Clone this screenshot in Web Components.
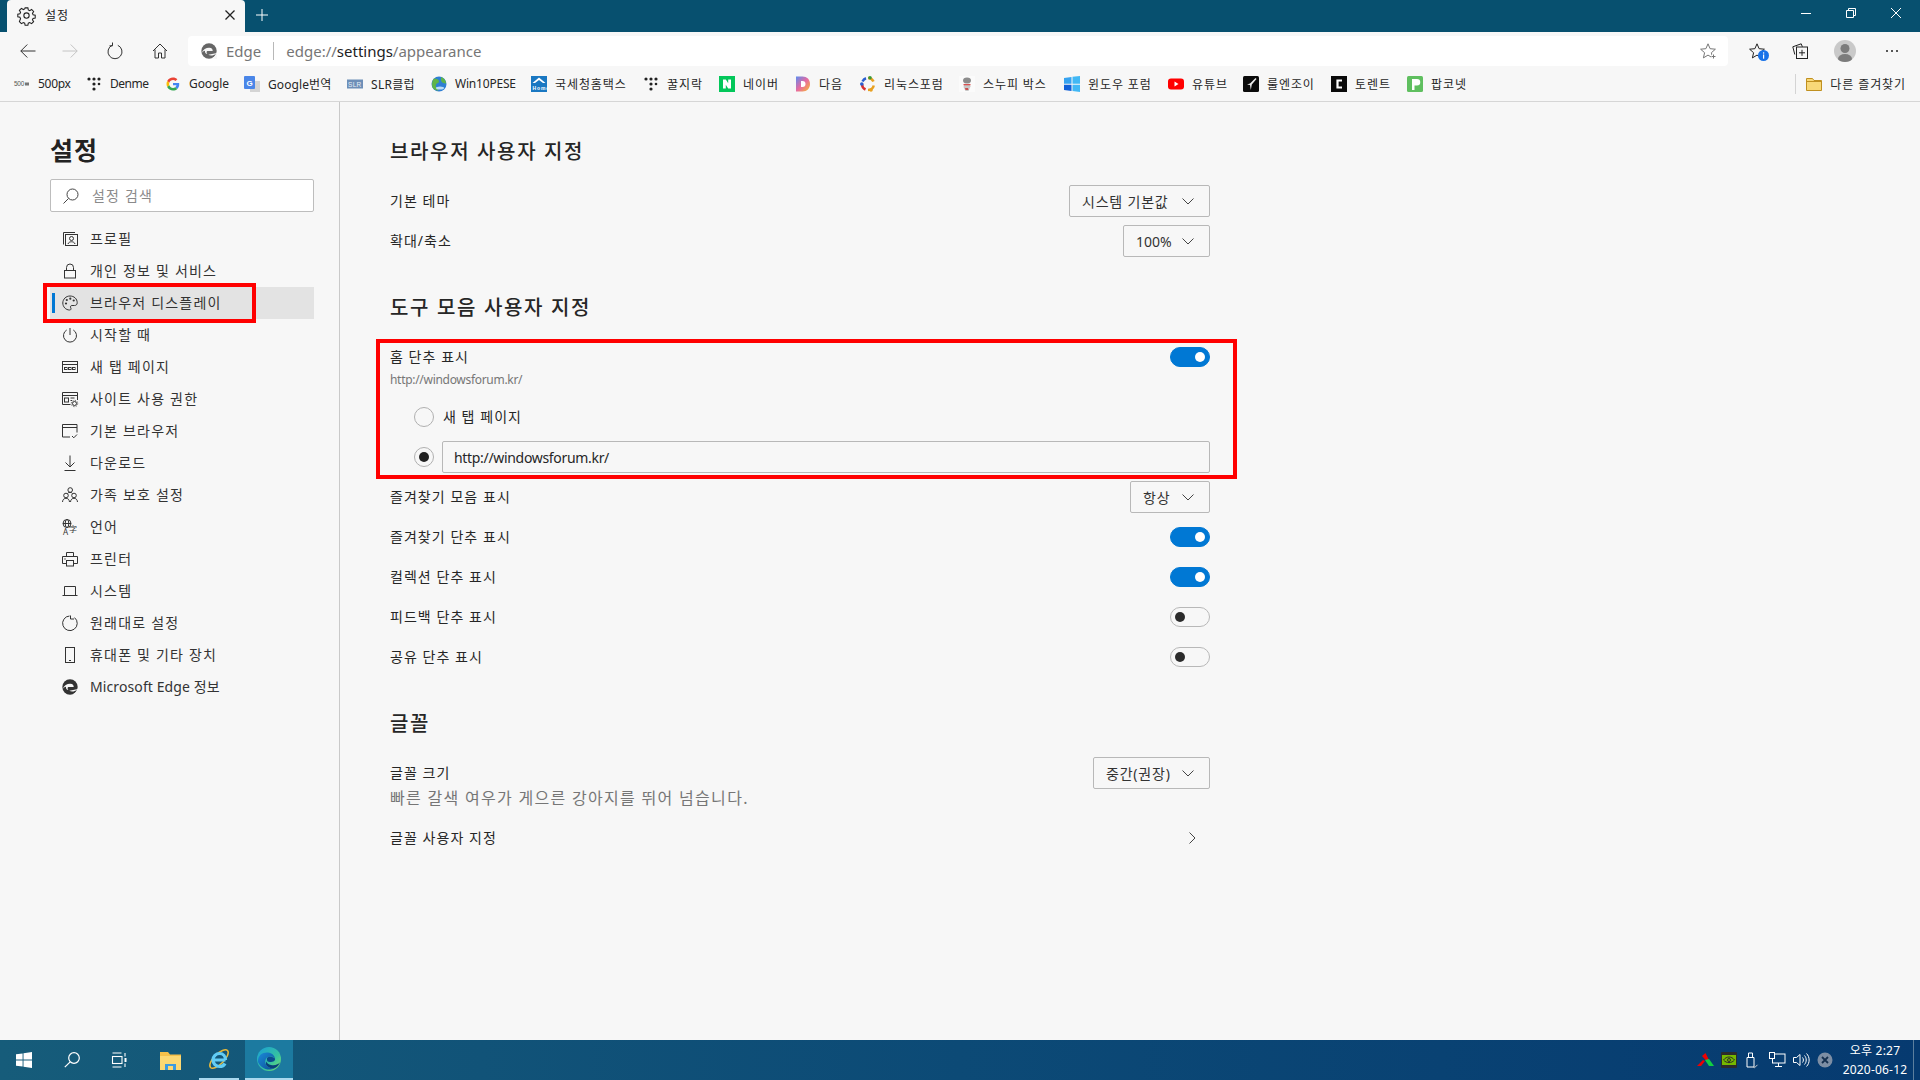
<!DOCTYPE html>
<html lang="ko">
<head>
<meta charset="utf-8">
<title>설정</title>
<style>
html, body { margin: 0; height: 100%; }
body {
    width: 1920px; height: 1080px; overflow: hidden;
    display: flex; flex-direction: column;
    font-family: "Noto Sans", "Noto Sans CJK KR", sans-serif;
    color: #262626; background: #f7f7f7;
}
</style>
</head>
<body>
<title-bar></title-bar>
<tool-bar></tool-bar>
<bookmark-bar>
    <book-mark icon="b500" w="72" ls="-.3">500px</book-mark>
    <book-mark icon="dots" w="79" ls="-.5">Denme</book-mark>
    <book-mark icon="google" w="79" ls="-.1">Google</book-mark>
    <book-mark icon="translate" w="103" ls=".1">Google번역</book-mark>
    <book-mark icon="slr" w="84" ls=".3">SLR클럽</book-mark>
    <book-mark icon="globe" w="100" ls="-.2">Win10PESE</book-mark>
    <book-mark icon="hometax" w="112">국세청홈택스</book-mark>
    <book-mark icon="dots" w="76">꿀지락</book-mark>
    <book-mark icon="naver" w="76">네이버</book-mark>
    <book-mark icon="daum" w="65">다음</book-mark>
    <book-mark icon="linux" w="99">리눅스포럼</book-mark>
    <book-mark icon="snoopy" w="105">스누피 박스</book-mark>
    <book-mark icon="winforum" w="104">윈도우 포럼</book-mark>
    <book-mark icon="youtube" w="75">유튜브</book-mark>
    <book-mark icon="ruli" w="88">룰엔조이</book-mark>
    <book-mark icon="ctile" w="76">토렌트</book-mark>
    <book-mark icon="ptile" w="100">팝코넷</book-mark>
</bookmark-bar>
<div style="display:flex;flex:1;min-height:0">
    <side-nav>
        <side-item icon="profile">프로필</side-item>
        <side-item icon="lock">개인 정보 및 서비스</side-item>
        <side-item icon="palette" active>브라우저 디스플레이</side-item>
        <side-item icon="power">시작할 때</side-item>
        <side-item icon="newtab">새 탭 페이지</side-item>
        <side-item icon="site">사이트 사용 권한</side-item>
        <side-item icon="browser">기본 브라우저</side-item>
        <side-item icon="download">다운로드</side-item>
        <side-item icon="family">가족 보호 설정</side-item>
        <side-item icon="language">언어</side-item>
        <side-item icon="printer">프린터</side-item>
        <side-item icon="laptop">시스템</side-item>
        <side-item icon="reset">원래대로 설정</side-item>
        <side-item icon="phone">휴대폰 및 기타 장치</side-item>
        <side-item icon="edgemono" ls=".1">Microsoft Edge 정보</side-item>
    </side-nav>
    <settings-page></settings-page>
</div>
<task-bar></task-bar>

<script>
const S = 'fill="none" stroke="currentColor" stroke-width="1"';
const iconLib = {
    // side menu
    profile: `<g ${S}><path d="M1.500 13.500V1.500H13"/><rect x="3.500" y="3.500" width="12" height="11"/><circle cx="9.500" cy="7.500" r="2"/><path d="M6 13c.6-3 6.400-3 7 0"/></g>`,
    lock: `<g ${S}><rect x="2.500" y="7.500" width="11" height="7.500"/><path d="M4.500 7.500V4.500a3.500 3.500 0 0 1 7 0v3"/></g>`,
    palette: `<g ${S}><path d="M8 1C4 1 .8 4.200.8 8s3 7 6.700 7c1.700 0 1.800-1.200 1.200-2.200-.7-1.200 0-2.300 1.300-2.300h2.500c1.700 0 2.700-1 2.700-2.800C15.200 3.800 12 1 8 1z"/></g><g fill="currentColor"><circle cx="4" cy="8.500" r="1.100"/><circle cx="4.800" cy="5" r="1.100"/><circle cx="8.300" cy="3.700" r="1.100"/><circle cx="11.700" cy="5.500" r="1.100"/></g>`,
    power: `<g ${S}><path d="M8 1v7"/><path d="M4.700 3a6.500 6.500 0 1 0 6.600 0"/></g>`,
    newtab: `<g ${S}><rect x=".5" y="2.500" width="15" height="11"/><path d="M.5 5.500h15"/><rect x="2.500" y="8.500" width="2.500" height="2"/><rect x="6.500" y="8.500" width="2.500" height="2"/><rect x="10.500" y="8.500" width="2.500" height="2"/></g>`,
    site: `<g ${S}><path d="M8.500 13.500H.5v-12h15V9"/><path d="M.5 4.500h15"/><rect x="2.500" y="7" width="4" height="4"/><path d="M8.500 7h4M8.500 9.500h1.500"/><circle cx="12.500" cy="12.500" r="2"/><circle cx="12.500" cy="12.500" r="3.200" stroke-dasharray="1 1.500"/></g>`,
    browser: `<g ${S}><path d="M15 9.500V1.500H.5v12.500H8"/><path d="M.5 4.500H15"/><path d="M10 13l1.800 1.800L15 11.500"/></g>`,
    download: `<g ${S}><path d="M8 .5v11.500M3.500 7.500L8 12l4.500-4.500M2.500 15.500h11"/></g>`,
    family: `<g ${S}><circle cx="8.200" cy="3" r="2.300"/><circle cx="4" cy="8.500" r="2.300"/><circle cx="12" cy="8.500" r="2.300"/><path d="M.5 15c.2-5 6.800-5 7 0M8.500 15c.2-5 6.800-5 7 0M5.500 6.500c.5-1.500 4.500-1.500 5 0"/></g>`,
    language: `<g ${S}><circle cx="5" cy="4.500" r="4"/><ellipse cx="5" cy="4.500" rx="1.800" ry="4"/><path d="M1 4.500h8"/></g><text x="1" y="15.500" font-size="8" fill="currentColor" font-family="Noto Sans">A</text><text x="7" y="13" font-size="8" fill="currentColor" font-family="Noto Sans CJK KR">字</text>`,
    printer: `<g ${S}><path d="M4.500 5V1.500h7V5M4.500 12.500H.5V5.500h15v7h-4"/><rect x="4.500" y="9.500" width="7" height="5.500"/></g><circle cx="3" cy="8" r=".7" fill="currentColor"/>`,
    laptop: `<g ${S}><path d="M2.500 12V3.500h11V12M.5 12.500h15"/></g>`,
    reset: `<g ${S}><path d="M12.500 2.600a7.300 7.300 0 1 1-5-1.600"/><path d="M8.500.5v3.500H12"/></g>`,
    phone: `<g ${S}><rect x="3.500" y=".5" width="9" height="15"/><path d="M7 13.500h2"/></g>`,
    edgemono: `<svg viewBox="0 0 24 24" x="0" y="0" width="16" height="16"><circle cx="12" cy="12" r="11.500" fill="currentColor"/><path d="M.8 15C3 9.500 8 6.800 12.500 7c3.500.2 5.500 2.500 5 5L9.500 12c-1.500 1-1.500 3 0 4.500-2.500-.5-4-2.500-3.500-5C4 12 2 13.300.8 15z" fill="#f7f7f7"/><path d="M11 17.500c3 2 8 1.500 11.500-1.500-1 3-3.500 6-7.500 7l9 1V15z" fill="#f7f7f7"/></svg>`,
    // toolbar
    back: `<g ${S} stroke-width="1.100"><path d="M15.500 8H.8M7.300 1.500L.8 8l6.500 6.500"/></g>`,
    forward: `<g ${S} stroke-width="1.100"><path d="M.5 8h14.700M8.700 1.500L15.200 8l-6.500 6.500"/></g>`,
    refresh: `<g ${S} stroke-width="1.100"><path d="M10.800 2.300a7 7 0 1 1-5.600 0"/><path d="M5.500 -.5v3.300H2.500"/></g>`,
    home: `<g ${S} stroke-width="1.100"><path d="M1 8l7-7 7 7M3 6.500v8.500h3.500v-5h3v5H13V6.500"/></g>`,
    star: `<g ${S}><path d="M8 .8l2.100 4.900 5.300.5-4 3.500 1.200 5.200L8 12.100l-4.600 2.800 1.200-5.200-4-3.500 5.300-.5z"/></g><path d="M11 13.500h4.500M13.200 11.200v4.500" stroke="#fff" stroke-width="2.500"/><path d="M11.500 13.500h4M13.500 11.500v4" stroke="currentColor"/>`,
    favbar: `<g ${S}><path d="M8 .8l2.100 4.900 5.300.5-4 3.500 1.200 5.200L8 12.100l-4.600 2.800 1.200-5.200-4-3.500 5.300-.5z"/></g><circle cx="14.500" cy="12.500" r="5.500" fill="#1a73e8"/><rect x="14" y="11.500" width="1.200" height="4.200" fill="#fff"/><rect x="14" y="9.300" width="1.200" height="1.300" fill="#fff"/>`,
    collections: `<g ${S}><path d="M2.800 11.500L.8 3.800 9.200.8l1.200 3"/><rect x="4.500" y="4" width="11" height="11.500" fill="#f7f7f7"/><path d="M10 6.800v6M7 9.800h6"/></g>`,
    gear: `<g ${S}><circle cx="8" cy="8" r="2.500"/><path d="M6.700 .8h2.600l.4 2 1.300.6 1.800-1.100 1.900 1.900-1.100 1.800.6 1.300 2 .4v2.600l-2 .4-.6 1.300 1.100 1.800-1.900 1.900-1.800-1.100-1.300.6-.4 2H6.700l-.4-2-1.300-.6-1.800 1.100-1.900-1.900L2.400 11l-.6-1.300-2-.4V6.700l2-.4.6-1.300-1.100-1.800 1.900-1.900L5 2.400l1.300-.6z"/></g>`,
    search: `<g ${S}><circle cx="9.500" cy="6.500" r="5.500"/><path d="M5.500 10.500L.5 15.500"/></g>`,
    // favicons
    b500: `<text x="0" y="10" font-size="6.500" fill="#555" font-family="Liberation Sans">500</text><rect x="11" y="6.500" width="4" height="3" fill="#777"/>`,
    dots: `<g fill="#222"><circle cx="3" cy="3" r="1.600"/><circle cx="8" cy="3" r="1.600"/><circle cx="13" cy="3" r="1.600"/><circle cx="8" cy="8" r="1.600"/><circle cx="13" cy="8" r="1.300"/><circle cx="8" cy="13" r="1.600"/></g>`,
    google: `<svg viewBox="0 0 48 48" x="1.500" y="1.500" width="13" height="13"><path fill="#EA4335" d="M24 9.500c3.500 0 6.700 1.200 9.200 3.600l6.900-6.900C35.900 2.400 30.500 0 24 0 14.600 0 6.500 5.400 2.600 13.200l8 6.200C12.400 13.700 17.700 9.500 24 9.500z"/><path fill="#4285F4" d="M47 24.500c0-1.600-.2-3.100-.4-4.500H24v9h12.900c-.6 3-2.200 5.500-4.800 7.200l7.700 6c4.500-4.200 7.200-10.400 7.200-17.700z"/><path fill="#FBBC05" d="M10.500 28.600c-.5-1.500-.8-3-.8-4.600s.3-3.200.8-4.600l-8-6.200C.9 16.500 0 20.100 0 24s.9 7.500 2.600 10.800z"/><path fill="#34A853" d="M24 48c6.500 0 11.900-2.100 15.900-5.800l-7.700-6c-2.200 1.500-4.900 2.300-8.200 2.300-6.300 0-11.600-4.200-13.500-9.900l-8 6.200C6.500 42.600 14.600 48 24 48z"/></svg>`,
    translate: `<rect x="6" y="5" width="10" height="11" fill="#d4d4d4"/><rect x="0" y="0" width="11" height="13" rx="1" fill="#4a86e8"/><text x="2.500" y="9.500" font-size="8" font-weight="700" fill="#fff" font-family="Liberation Sans">G</text>`,
    slr: `<rect x="0" y="3.500" width="16" height="9" fill="#6d8fb8"/><text x="1" y="10.500" font-size="6.500" fill="#e8eef6" font-family="Liberation Sans">SLR</text>`,
    globe: `<circle cx="8" cy="8" r="7.500" fill="#2f7fd4"/><path d="M3 2.500c3 0 5 1 5 3s-2 1-3 3 .5 3 2 5-4 1-5.500-2C.5 8 1.500 4 3 2.500zM10 1c3 1 5 3.500 5 6.500-2 0-5-1-5-3.500z" fill="#5fb548"/><ellipse cx="9" cy="12" rx="4" ry="1.500" fill="#bcdcf5"/>`,
    hometax: `<rect width="16" height="16" fill="#1a78c2"/><path d="M1.500 7L8 1.500 14.500 7h-2.500L8 4 4 7z" fill="#fff"/><text x="1.500" y="13.500" font-size="5" font-weight="700" fill="#fff" font-family="Liberation Sans">Home</text>`,
    naver: `<rect width="16" height="16" fill="#03c75a"/><path d="M4 3.500h2.800l2.400 3.800V3.500H12v9H9.200L6.800 8.700v3.800H4z" fill="#fff"/>`,
    daum: `<defs><linearGradient id="dg" x1="0" y1="0" x2="1" y2="1"><stop offset="0" stop-color="#5a8df0"/><stop offset=".5" stop-color="#e86aa0"/><stop offset="1" stop-color="#f8c02c"/></linearGradient></defs><path d="M1 .5h6.500c4.500 0 7.500 3 7.500 7.500s-3 7.500-7.500 7.500H1z" fill="url(#dg)"/><path d="M6 5h1.500c2 0 3 1.200 3 3s-1 3-3 3H6z" fill="#fff"/>`,
    linux: `<g fill="none" stroke-width="2.500"><path d="M8 2a6 6 0 0 1 5.500 3.500" stroke="#e8a020"/><path d="M13.800 9.500A6 6 0 0 1 8 14" stroke="#e8a020"/><path d="M5.500 13.500A6 6 0 0 1 2 8" stroke="#d83030"/><path d="M2.500 5.500A6 6 0 0 1 6 2.300" stroke="#2a5fd0"/></g><circle cx="10" cy="1.800" r="1.800" fill="#3a9a3a"/><circle cx="1.800" cy="8" r="1.800" fill="#2a5fd0"/><circle cx="11" cy="14" r="1.800" fill="#e8a020"/>`,
    snoopy: `<rect width="16" height="16" fill="#fbfbfb"/><ellipse cx="8" cy="4.500" rx="4" ry="3" fill="#8c8c8c"/><path d="M5.500 7.500h5l1 3-2 4.500H6.500L4.500 11z" fill="#c8c8c8"/><path d="M4.500 8h7v1.300h-7z" fill="#d85050"/><path d="M6 12l3 0 .5 2H6.500z" fill="#c85050"/>`,
    winforum: `<path d="M0 2l7.500-1v6.800H0z" fill="#36a3f0"/><path d="M8.500.8L16 0v7.800H8.500z" fill="#41b8f5"/><path d="M0 8.800h7.500v6.300L0 14z" fill="#1060d8"/><path d="M8.500 8.800H16V16l-7.500-1z" fill="#41b8f5"/>`,
    youtube: `<rect x="0" y="2.500" width="16" height="11" rx="3" fill="#f00"/><path d="M6.500 5.500l4 2.500-4 2.500z" fill="#fff"/>`,
    ruli: `<rect width="16" height="16" rx="1.500" fill="#0b0b0b"/><path d="M12.500 2L7 7.500l-3 1 3 .5 .8 5 1-5.500L13.500 3z" fill="#eee"/>`,
    ctile: `<rect width="16" height="16" fill="#0a0a0a"/><path d="M11 4.500H6.500v7H11" fill="none" stroke="#fff" stroke-width="2.200"/>`,
    ptile: `<rect width="16" height="16" rx="1.500" fill="#5fbf5f"/><path d="M5 14V3h5a3 3 0 0 1 0 6.500H7.500V14z" fill="#fff"/>`,
    folder: `<path d="M.5 2.500h6l1.500 2h7.500v10H.5z" fill="#f8d878" stroke="#c09020"/><path d="M.5 5.500h15" stroke="#c09020"/>`,
    // taskbar
    windows: `<path d="M0 2.300l6.600-.9v6.200H0zM7.500 1.300L16 0v7.600H7.500zM0 8.400h6.600v6.200L0 13.700zM7.500 8.400H16V16l-8.500-1.200z" fill="#fff"/>`,
    tasksearch: `<g fill="none" stroke="#fff" stroke-width="1.200"><circle cx="10" cy="6" r="5.300"/><path d="M6.200 9.800L.8 15.200"/></g>`,
    taskview: `<g fill="none" stroke="#fff" stroke-width="1.100"><path d="M.5 1h9M.5 15h9"/><rect x=".5" y="4.500" width="9.500" height="7"/><path d="M13 1v3.500M13 11.500V15"/></g><rect x="12.500" y="6" width="2" height="4" fill="#fff"/>`,
    explorer: `<path d="M0 2h8l2 2.500h11V20H0z" fill="#f5c04a"/><path d="M0 6h21v14H0z" fill="#fcd873"/><path d="M5 14h11v6H5z" fill="#3d9be0"/><path d="M8 16h5v4H8z" fill="#fcd873"/>`,
    ie: `<g fill="none"><ellipse cx="11" cy="11" rx="12" ry="5" transform="rotate(-45 11 11)" stroke="#e8b93a" stroke-width="1.500"/><path d="M17.500 12H6M17.500 12c0-4-2.500-6.500-6-6.500S5 8.500 5 12s2.800 6.500 6.500 6.500c2.500 0 4.500-1 5.500-3" stroke="#62cdf5" stroke-width="3.200"/></g>`,
    edgecolor: `<svg viewBox="0 0 24 24" width="24" height="24"><defs><linearGradient id="eg" x1="0" y1="0" x2="1" y2="1"><stop offset="0" stop-color="#1a9fd8"/><stop offset=".6" stop-color="#35c1a0"/><stop offset="1" stop-color="#7be36a"/></linearGradient><linearGradient id="eb" x1="0" y1="0" x2="1" y2="1"><stop offset="0" stop-color="#1b8ad8"/><stop offset="1" stop-color="#0c4f96"/></linearGradient></defs><circle cx="12" cy="12" r="12" fill="url(#eg)"/><path d="M1 15C.5 8 6 5 11 5.500c4 .4 6.500 3 7 6-2-2.500-5-2.500-7-1.500-2.500 1.300-3.500 4.500-2 7.500 1.500 3 5.500 4.500 9.500 3.300A12 12 0 0 1 1 15z" fill="url(#eb)"/><path d="M10 11c1.500-1.500 5-2 8 .5.500 2.500-2 3.500-5 3.500-2 0-3-1-3-2z" fill="#0b4a8d"/><path d="M9 17.500c1.500 3 5.500 4.500 9.500 3.300 2-1.300 3.500-3 4.500-5.500-1.500 2-5 3.500-9 2.700-2.500-.5-4-2-5-3.500z" fill="#0b3f7a"/></svg>`,
    trayarrow: `<path d="M8.500 1L12 8l-3 .5L5 4z" fill="#f00000"/><path d="M0 14l6-6 2 1-4 5z" fill="#f00000"/><path d="M8 8l4-1 5 7h-5z" fill="#10d040"/>`,
    nvidia: `<rect width="16" height="16" rx="1" fill="#2c2c2c"/><rect x="1" y="3" width="14" height="10" fill="#76b900"/><path d="M2.500 8c3-4 8-4 11 0-3 3.500-8 3.500-11 0z" fill="none" stroke="#2c2c2c"/><circle cx="8" cy="8" r="1.500" fill="none" stroke="#2c2c2c"/>`,
    usb: `<g fill="none" stroke="#fff"><path d="M2 5.500h7v9.500H2zM3.500 5.500V1h4v4.500"/><path d="M8 14.500l1.500 1.300 3-3" stroke="#ccc"/></g>`,
    network: `<g fill="none" stroke="#fff"><rect x="3.500" y="2" width="12.500" height="9"/><path d="M9.500 11v3M6 14.500h7"/><rect x=".5" y=".5" width="5" height="6" fill="#0a3a6f"/></g>`,
    volume: `<g fill="none" stroke="#fff"><path d="M.5 5.500h3l3.500-3v11l-3.500-3h-3z"/><path d="M9.500 5.500c1.200 1.500 1.200 3.500 0 5M11.500 3.500c2.300 2.500 2.300 6.500 0 9M13.500 1.500c3.500 3.500 3.500 9.500 0 13"/></g>`,
    xcircle: `<circle cx="8" cy="8" r="7.500" fill="#7d8ea4"/><path d="M5 5l6 6M11 5l-6 6" stroke="#16304f" stroke-width="1.800"/>`
};

class UiIcon extends HTMLElement {
    connectedCallback() {
        const size = this.getAttribute("size") || 16;
        const box = this.getAttribute("box") || 16;
        this.attachShadow({mode: "open"}).innerHTML = `
            <style>
            :host { display: inline-flex; flex: none; width: ${size}px; height: ${size}px; }
            svg { display: block; overflow: visible; }
            </style>
            <svg width="${size}" height="${size}" viewBox="0 0 ${box} ${box}">${iconLib[this.getAttribute("name")] || ""}</svg>`;
    }
}

class TitleBar extends HTMLElement {
    constructor() {
        super();
        this.attachShadow({mode: "open"}).innerHTML = `
            <style>
            :host { display: flex; flex: none; height: 32px; background: #07506f; color: #fff; align-items: flex-end; padding: 0 2px 0 7px; }
            .tab { width: 238px; height: 32px; box-sizing: border-box; background: #f7f7f7; color: #222; border-radius: 4px 4px 0 0;
                   display: flex; align-items: center; padding: 0 10px 2px 11px; font-size: 12px; letter-spacing: 1px; }
            .tab span { margin-left: 10px; flex: 1; }
            .plus { width: 12px; height: 12px; margin: 0 0 11px 11px; }
            .ctl { margin-left: auto; display: flex; align-self: flex-start; }
            .ctl div { width: 45px; height: 26px; display: flex; align-items: center; justify-content: center; }
            </style>
            <div class="tab"><ui-icon name="gear" size="17" box="16"></ui-icon><span>설정</span>
                <svg width="10" height="10" viewBox="0 0 10 10"><path d="M.5 .5l9 9M9.500 .5l-9 9" stroke="#222" stroke-width="1.300"/></svg></div>
            <svg class="plus" viewBox="0 0 12 12"><path d="M6 0v12M0 6h12" stroke="#fff"/></svg>
            <div class="ctl">
                <div><svg width="10" height="10" viewBox="0 0 10 10"><path d="M0 5.500h10" stroke="#fff"/></svg></div>
                <div><svg width="10" height="10" viewBox="0 0 10 10"><path d="M.5 2.500h7v7h-7zM2.500 2.500v-2h7v7h-2" fill="none" stroke="#fff"/></svg></div>
                <div><svg width="10" height="10" viewBox="0 0 10 10"><path d="M0 0l10 10M10 0L0 10" stroke="#fff"/></svg></div>
            </div>`;
    }
}

class ToolBar extends HTMLElement {
    constructor() {
        super();
        this.attachShadow({mode: "open"}).innerHTML = `
            <style>
            :host { display: flex; flex: none; height: 36px; box-sizing: border-box; padding-top: 4px; background: #f7f7f7; align-items: flex-start; color: #333; }
            .btn { width: 45px; height: 30px; display: flex; align-items: center; justify-content: center; }
            .nav { padding-left: 10px; display: flex; width: 178px; }
            .addr { width: 1540px; height: 30px; box-sizing: border-box; background: #fff; border-radius: 4px;
                    display: flex; align-items: center; padding: 0 12px 0 13px; font-size: 15px; color: #767676; }
            .site { margin-left: 9px; padding-right: 12px; border-right: 1px solid #b8b8b8; line-height: 18px; }
            .url { margin-left: 12px; flex: 1; }
            .url b { color: #222; font-weight: 400; }
            .right { display: flex; margin-left: 8px; }
            .right .btn { width: 44px; }
            .avatar { width: 22px; height: 22px; border-radius: 50%; background: #c9c9c9; overflow: hidden; position: relative; }
            .more { display: flex; gap: 3px; }
            .more i { width: 2px; height: 2px; background: #222; border-radius: 50%; }
            </style>
            <div class="nav">
                <div class="btn" style="width:36px"><ui-icon name="back"></ui-icon></div>
                <div class="btn" style="color:#c4c4c4;width:44px;margin-left:2px"><ui-icon name="forward"></ui-icon></div>
                <div class="btn"><ui-icon name="refresh"></ui-icon></div>
                <div class="btn"><ui-icon name="home"></ui-icon></div>
            </div>
            <div class="addr">
                <ui-icon name="edgemono" style="color:#666"></ui-icon>
                <span class="site">Edge</span>
                <span class="url">edge://<b>settings</b>/appearance</span>
                <ui-icon name="star" style="color:#777"></ui-icon>
            </div>
            <div class="right">
                <div class="btn" style="margin-left:-1px"><ui-icon name="favbar" style="color:#222"></ui-icon></div>
                <div class="btn" style="margin-left:-1px"><ui-icon name="collections" style="color:#222"></ui-icon></div>
                <div class="btn" style="margin-left:1px"><div class="avatar">
                    <svg width="22" height="22" viewBox="0 0 22 22" style="display:block"><circle cx="11" cy="8.500" r="4.500" fill="#7c7c7c"/><ellipse cx="11" cy="19" rx="7" ry="5" fill="#7c7c7c"/></svg>
                </div></div>
                <div class="btn" style="margin-left:3px"><div class="more"><i></i><i></i><i></i></div></div>
            </div>`;
    }
}

class BookmarkBar extends HTMLElement {
    constructor() {
        super();
        this.attachShadow({mode: "open"}).innerHTML = `
            <style>
            :host { display: flex; flex: none; height: 34px; box-sizing: border-box; background: #f7f7f7; border-bottom: 1px solid #d6d6d6;
                    padding: 0 14px 2px 14px; align-items: center; font-size: 12px; }
            .other { margin-left: auto; display: flex; align-items: center; }
            .sep { width: 1px; height: 20px; background: #d4d4d4; margin-right: 10px; }
            .lab { margin-left: 8px; letter-spacing: .9px; }
            </style>
            <slot></slot>
            <div class="other"><div class="sep"></div><ui-icon name="folder"></ui-icon><span class="lab">다른 즐겨찾기</span></div>`;
    }
}

class BookMark extends HTMLElement {
    connectedCallback() {
        const ls = this.getAttribute("ls") || ".9";
        this.attachShadow({mode: "open"}).innerHTML = `
            <style>
            :host { display: flex; flex: none; width: ${this.getAttribute("w")}px; align-items: center; gap: 8px; white-space: nowrap; letter-spacing: ${ls}px; }
            </style>
            <ui-icon name="${this.getAttribute("icon")}"></ui-icon><span><slot></slot></span>`;
    }
}

class SideNav extends HTMLElement {
    constructor() {
        super();
        this.attachShadow({mode: "open"}).innerHTML = `
            <style>
            :host { display: block; flex: none; width: 340px; box-sizing: border-box; border-right: 1px solid #c9c9c9; padding: 30px 25px 0 50px; }
            h1 { margin: 0; font-size: 25px; line-height: 36px; font-weight: 700; letter-spacing: 1px; color: #222; }
            .search { margin-top: 11px; height: 33px; box-sizing: border-box; border: 1px solid #bdbdbd; border-radius: 2px; background: #fff;
                      display: flex; align-items: center; padding-left: 12px; font-size: 14px; color: #8a8a8a; letter-spacing: 1.200px; }
            .search span { margin: -2px 0 0 13px; }
            .list { margin-top: 11px; }
            </style>
            <h1>설정</h1>
            <div class="search"><ui-icon name="search" style="color:#444"></ui-icon><span>설정 검색</span></div>
            <div class="list"><slot></slot></div>`;
    }
}

class SideItem extends HTMLElement {
    connectedCallback() {
        const active = this.hasAttribute("active");
        const ls = this.getAttribute("ls") || "1.2";
        this.attachShadow({mode: "open"}).innerHTML = `
            <style>
            :host { display: flex; height: 32px; align-items: center; padding-left: 12px; position: relative;
                    font-size: 14px; letter-spacing: ${ls}px; color: #333; ${active ? "background: #e3e3e3;" : ""} }
            .txt { margin: -2px 0 0 12px; white-space: nowrap; }
            .bar { position: absolute; left: 2px; top: 6px; width: 3px; height: 20px; background: #0078d4; }
            .mark { position: absolute; left: -7px; top: -4px; width: 213px; height: 40px; box-sizing: border-box; border: 4px solid #f00; }
            </style>
            <ui-icon name="${this.getAttribute("icon")}"></ui-icon><span class="txt"><slot></slot></span>
            ${active ? '<div class="bar"></div><div class="mark"></div>' : ""}`;
    }
}

class SetSelect extends HTMLElement {
    connectedCallback() {
        const ls = this.getAttribute("ls") || ".8";
        this.attachShadow({mode: "open"}).innerHTML = `
            <style>
            :host { display: flex; flex: none; width: ${this.getAttribute("w")}px; height: 32px; box-sizing: border-box; border: 1px solid #b8b8b8; border-radius: 2px;
                    align-items: center; padding: 0 15px 0 12px; font-size: 14px; letter-spacing: ${ls}px; color: #333; }
            span { flex: 1; white-space: nowrap; }
            svg { flex: none; }
            </style>
            <span><slot></slot></span>
            <svg width="12" height="7" viewBox="0 0 12 7"><path d="M.5 .5L6 6l5.500-5.500" fill="none" stroke="#444"/></svg>`;
    }
}

class SetToggle extends HTMLElement {
    connectedCallback() {
        const on = this.hasAttribute("on");
        this.attachShadow({mode: "open"}).innerHTML = `
            <style>
            :host { display: flex; flex: none; width: 40px; height: 20px; box-sizing: border-box; border-radius: 10px; align-items: center; padding: 0 4px;
                    justify-content: ${on ? "flex-end" : "flex-start"};
                    background: ${on ? "#0078d4" : "transparent"}; border: 1px solid ${on ? "#0078d4" : "#b8b8b8"}; }
            i { width: 10px; height: 10px; border-radius: 50%; background: ${on ? "#fff" : "#2b2b2b"}; }
            </style><i></i>`;
    }
}

class SetRadio extends HTMLElement {
    connectedCallback() {
        const on = this.hasAttribute("on");
        this.attachShadow({mode: "open"}).innerHTML = `
            <style>
            :host { display: flex; flex: none; width: 20px; height: 20px; box-sizing: border-box; border-radius: 50%; border: 1px solid #b0b0b0;
                    align-items: center; justify-content: center; }
            i { width: 10px; height: 10px; border-radius: 50%; background: #222; }
            </style>${on ? "<i></i>" : ""}`;
    }
}

class SetRow extends HTMLElement {
    constructor() {
        super();
        this.attachShadow({mode: "open"}).innerHTML = `
            <style>
            :host { display: flex; height: 32px; align-items: center; justify-content: space-between; font-size: 14px; letter-spacing: 1.050px; color: #262626; }
            span { margin-top: -2px; }
            </style>
            <span><slot></slot></span><slot name="end"></slot>`;
    }
}

class SettingsPage extends HTMLElement {
    constructor() {
        super();
        this.attachShadow({mode: "open"}).innerHTML = `
            <style>
            :host { display: block; flex: 1; padding: 35px 0 0 50px; }
            .wrap { width: 820px; display: flex; flex-direction: column; }
            h2 { margin: 0; font-size: 20px; line-height: 26px; padding-top: 2px; font-weight: 500; letter-spacing: 1.650px; color: #262626; }
            h2 + * { margin-top: 20px; }
            h2:not(:first-child) { margin-top: 36px; }
            set-row + set-row { margin-top: 8px; }
            .home { position: relative; margin-top: 22px; margin-bottom: 8px; }
            .home set-row { height: 28px; }
            .home .mark { position: absolute; left: -14px; right: -27px; top: -4px; bottom: -6px; border: 4px solid #f00; pointer-events: none; }
            .sub { font-size: 12px; line-height: 16px; padding-top: 1px; letter-spacing: -.3px; color: #767676; }
            .opt { display: flex; height: 32px; align-items: center; gap: 9px; padding-left: 24px; font-size: 14px; letter-spacing: 1.050px; }
            .opt span { margin-top: -2px; }
            .opt.a { margin-top: 13px; }
            .opt.b { margin-top: 8px; gap: 8px; }
            .input { flex: 1; height: 32px; box-sizing: border-box; border: 1px solid #b8b8b8; border-radius: 2px;
                     display: flex; align-items: center; padding-left: 11px; font-size: 14px; letter-spacing: -.32px; color: #262626; }
            .preview { margin-top: -2px; font-size: 16px; line-height: 22px; letter-spacing: 1.300px; color: #767676; }
            .last { margin-top: 13px; }
            </style>
            <div class="wrap">
                <h2>브라우저 사용자 지정</h2>
                <set-row>기본 테마<set-select slot="end" w="141">시스템 기본값</set-select></set-row>
                <set-row>확대/축소<set-select slot="end" w="87" ls="0">100%</set-select></set-row>
                <h2>도구 모음 사용자 지정</h2>
                <div class="home">
                    <set-row>홈 단추 표시<set-toggle slot="end" on></set-toggle></set-row>
                    <div class="sub">http://windowsforum.kr/</div>
                    <div class="opt a"><set-radio></set-radio><span>새 탭 페이지</span></div>
                    <div class="opt b"><set-radio on></set-radio><div class="input">http://windowsforum.kr/</div></div>
                    <div class="mark"></div>
                </div>
                <set-row>즐겨찾기 모음 표시<set-select slot="end" w="80">항상</set-select></set-row>
                <set-row>즐겨찾기 단추 표시<set-toggle slot="end" on></set-toggle></set-row>
                <set-row>컬렉션 단추 표시<set-toggle slot="end" on></set-toggle></set-row>
                <set-row>피드백 단추 표시<set-toggle slot="end"></set-toggle></set-row>
                <set-row>공유 단추 표시<set-toggle slot="end"></set-toggle></set-row>
                <h2>글꼴</h2>
                <set-row>글꼴 크기<set-select slot="end" w="117">중간(권장)</set-select></set-row>
                <div class="preview">빠른 갈색 여우가 게으른 강아지를 뛰어 넘습니다.</div>
                <set-row class="last">글꼴 사용자 지정
                    <svg slot="end" width="7" height="12" viewBox="0 0 7 12" style="margin-right:14px"><path d="M.5 .5L6 6 .5 11.500" fill="none" stroke="#444"/></svg>
                </set-row>
            </div>`;
    }
}

class TaskBar extends HTMLElement {
    constructor() {
        super();
        this.attachShadow({mode: "open"}).innerHTML = `
            <style>
            :host { display: flex; flex: none; height: 40px; background: linear-gradient(90deg, #165c7a 0%, #0c4a76 50%, #063a70 100%); color: #fff; }
            .app { width: 48px; height: 40px; box-sizing: border-box; display: flex; align-items: center; justify-content: center; }
            .run { border-bottom: 2px solid #a9d8ee; }
            .ie { width: 40px; margin: 0 6px 0 5px; }
            .cur { background: #1c7aa0; }
            .tray { margin-left: auto; display: flex; align-items: center; }
            .tray div { width: 24px; display: flex; justify-content: center; }
            .clock { width: 76px !important; flex-direction: column; align-items: center; font-size: 12px; line-height: 19px; letter-spacing: .2px; white-space: nowrap; margin-top: -1px; }
            .desk { width: 7px !important; height: 40px; box-sizing: border-box; border-left: 1px solid #5c7f9e; }
            </style>
            <div class="app"><ui-icon name="windows"></ui-icon></div>
            <div class="app"><ui-icon name="tasksearch"></ui-icon></div>
            <div class="app"><ui-icon name="taskview"></ui-icon></div>
            <div class="app" style="margin-left:2px"><ui-icon name="explorer" size="21" box="21"></ui-icon></div>
            <div class="app run ie"><ui-icon name="ie" size="22" box="22"></ui-icon></div>
            <div class="app run cur"><ui-icon name="edgecolor" size="24" box="24"></ui-icon></div>
            <div class="tray">
                <div><ui-icon name="trayarrow"></ui-icon></div>
                <div><ui-icon name="nvidia"></ui-icon></div>
                <div style="width:24px"><ui-icon name="usb"></ui-icon></div>
                <div><ui-icon name="network"></ui-icon></div>
                <div><ui-icon name="volume"></ui-icon></div>
                <div><ui-icon name="xcircle"></ui-icon></div>
                <div class="clock"><span>오후 2:27</span><span>2020-06-12</span></div>
                <div class="desk"></div>
            </div>`;
    }
}

customElements.define("ui-icon", UiIcon);
customElements.define("title-bar", TitleBar);
customElements.define("tool-bar", ToolBar);
customElements.define("bookmark-bar", BookmarkBar);
customElements.define("book-mark", BookMark);
customElements.define("side-nav", SideNav);
customElements.define("side-item", SideItem);
customElements.define("set-select", SetSelect);
customElements.define("set-toggle", SetToggle);
customElements.define("set-radio", SetRadio);
customElements.define("set-row", SetRow);
customElements.define("settings-page", SettingsPage);
customElements.define("task-bar", TaskBar);
</script>
</body>
</html>
